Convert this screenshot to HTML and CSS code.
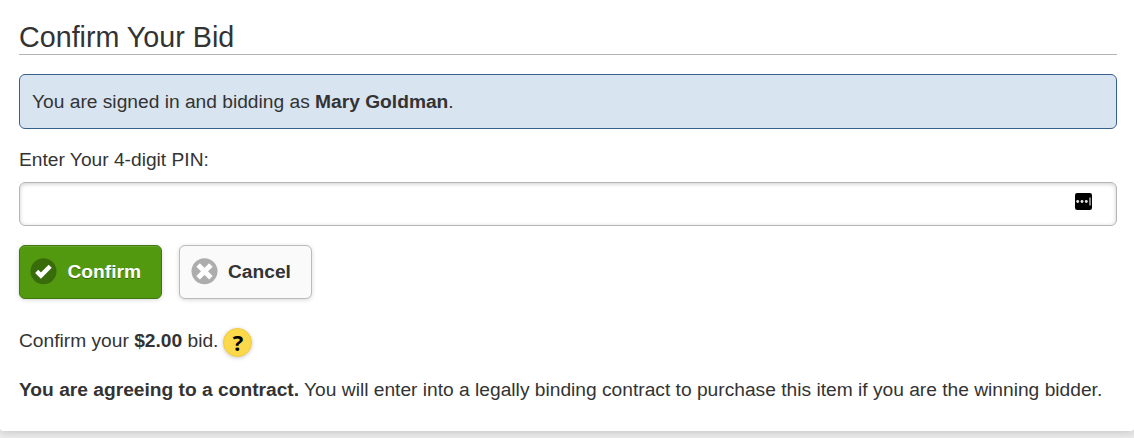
FILE: index.html
```html
<!DOCTYPE html>
<html lang="en">
<head>
<meta charset="utf-8">
<title>Confirm Your Bid</title>
<link rel="stylesheet" href="styles.css">
</head>
<body>
<main class="panel">
  <h1 class="title">Confirm Your Bid</h1>
  <div class="notice"><p class="text">You are signed in and bidding as <strong>Mary Goldman</strong>.</p></div>
  <label class="text pin-label" for="pin">Enter Your 4-digit PIN:</label>
  <div class="field">
    <input class="pin" id="pin" type="password">
    <svg class="manager" width="18" height="17" viewBox="0 0 18 17" aria-hidden="true">
      <rect width="17" height="17" rx="2.2" fill="#000"/>
      <g fill="#e4e4e4"><circle cx="2.7" cy="8.5" r="1.45"/><circle cx="7" cy="8.5" r="1.45"/><circle cx="11.3" cy="8.5" r="1.45"/></g>
      <path d="M15 4.5v8" stroke="#858585" stroke-width="2"/>
    </svg>
  </div>
  <div class="actions">
    <button class="btn confirm" type="button">
      <svg width="27" height="27" viewBox="0 0 27 27" aria-hidden="true"><circle cx="13.5" cy="13.3" r="13" fill="#386c0b"/><path d="M6.7 13.4l4.2 4.2 9.3-9.3" fill="none" stroke="#fff" stroke-width="4.4"/></svg>
      <span>Confirm</span>
    </button>
    <button class="btn cancel" type="button">
      <svg width="27" height="27" viewBox="0 0 27 27" aria-hidden="true"><circle cx="13.5" cy="13.3" r="13" fill="#adadad"/><path d="M7.1 6.9l12.8 12.8M19.9 6.9L7.1 19.7" stroke="#fff" stroke-width="5"/></svg>
      <span>Cancel</span>
    </button>
  </div>
  <div class="amount">
    <p class="text">Confirm your <strong>$2.00</strong> bid.</p>
    <span class="help">?</span>
  </div>
  <p class="text contract"><strong>You are agreeing to a contract.</strong> You will enter into a legally binding contract to purchase this item if you are the winning bidder.</p>
</main>
</body>
</html>
```
FILE: styles.css
```css
* { box-sizing: border-box; }
body {
  margin: 0;
  height: 438px;
  overflow: hidden;
  background: #ececec;
  color: #333;
  font-family: "Liberation Sans", Arial, sans-serif;
}
.panel {
  height: 431px;
  padding: 20px 17px 0 19px;
  background: #fff;
  border-radius: 0 0 3px 3px;
  box-shadow: 0 1px 10px rgba(0, 0, 0, .18);
}
.title {
  height: 35px;
  margin: 0 0 19px;
  border-bottom: 1px solid #b3b3b3;
  font-size: 28.7px;
  font-weight: 400;
  line-height: 34px;
}
.text {
  margin: 0;
  font-size: 19.2px;
  line-height: 24px;
  white-space: nowrap;
}
.notice {
  height: 55px;
  padding: 15px 12px;
  border: 1px solid #38608f;
  border-radius: 6px;
  background: #d8e4f0;
}
.pin-label { display: block; margin: 19px 0 10px; }
.field { position: relative; height: 44px; }
.pin {
  display: block;
  width: 100%;
  height: 44px;
  padding: 0 60px 0 12px;
  border: 1px solid #b6b6b6;
  border-radius: 6px;
  background: #fff;
  box-shadow: inset 0 1px 4px rgba(0, 0, 0, .2);
  font: inherit;
}
.manager { position: absolute; top: 11px; right: 24px; }
.actions { display: flex; gap: 17px; margin-top: 19px; }
.btn {
  display: flex;
  align-items: center;
  gap: 10.5px;
  height: 54px;
  padding: 0 0 1px 10px;
  border: 1px solid #bbb;
  border-radius: 6px;
  font: bold 19.2px/24px "Liberation Sans", Arial, sans-serif;
  box-shadow: 0 1px 4px rgba(0, 0, 0, .16);
}
.confirm {
  width: 143px;
  border-color: #3f780d;
  background: #53990f;
  color: #fff;
  text-shadow: 0 1px 0 #356609;
  box-shadow: 0 1px 4px rgba(0, 0, 0, .16), inset 0 1px 0 #67a62a;
}
.cancel { width: 133px; padding-left: 10.5px; background: #fafafa; color: #333; }
.amount { display: flex; gap: 5px; margin-top: 29px; height: 30px; }
.amount .text { padding-top: 1px; }
.help {
  width: 29px;
  height: 29px;
  border: 1px solid #f2ca3d;
  border-radius: 50%;
  background: #fbd94b;
  box-shadow: 0 1px 4px rgba(0, 0, 0, .2);
  color: #000;
  font: bold 22px/26px "Open Sans", sans-serif;
  text-align: center;
}
.contract { margin-top: 20px; }
```
